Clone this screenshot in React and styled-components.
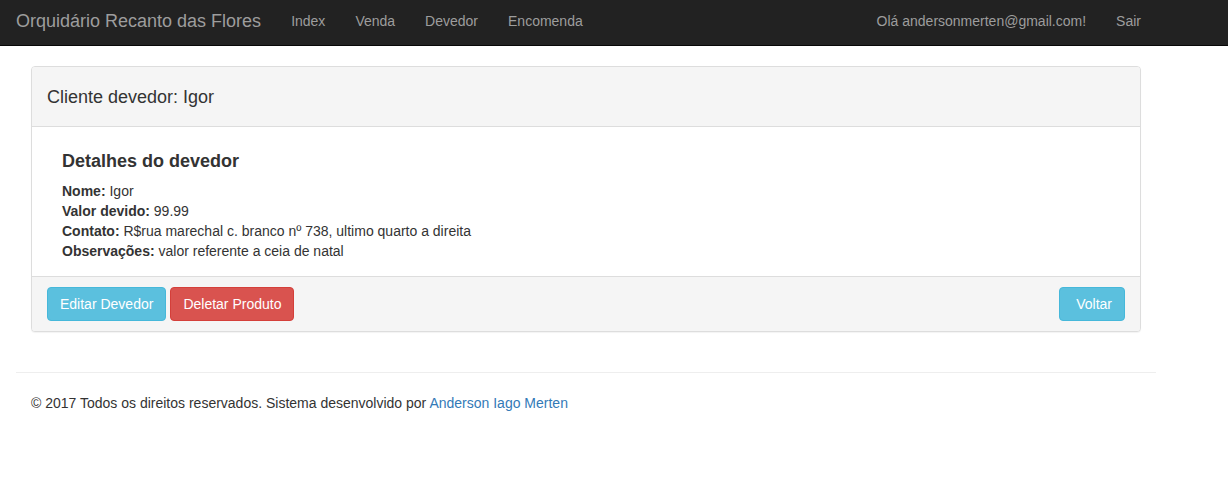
import styled, { createGlobalStyle } from "styled-components";

const GlobalStyle = createGlobalStyle`
  * {
    box-sizing: border-box;
  }

  body {
    margin: 0;
    background: #fff;
    color: #333;
    font-family: "Liberation Sans", Arial, sans-serif;
    font-size: 14px;
    line-height: 20px;
  }
`;

const debtor = {
  nome: "Igor",
  valor: "99.99",
  contato: "R$rua marechal c. branco nº 738, ultimo quarto a direita",
  obs: "valor referente a ceia de natal",
};

const App = () => {
  return (
    <>
      <GlobalStyle />
      <Navbar>
        <Container>
          <NavLeft>
            <Brand href="#">Orquidário Recanto das Flores</Brand>
            <NavLink href="#">Index</NavLink>
            <NavLink href="#">Venda</NavLink>
            <NavLink href="#">Devedor</NavLink>
            <NavLink href="#">Encomenda</NavLink>
          </NavLeft>
          <NavRight>
            <NavLink href="#">Olá andersonmerten@gmail.com!</NavLink>
            <NavLink href="#">Sair</NavLink>
          </NavRight>
        </Container>
      </Navbar>

      <Main>
        <Panel>
          <PanelHeading>Cliente devedor: {debtor.nome}</PanelHeading>
          <PanelBody>
            <Title>Detalhes do devedor</Title>
            <Info>
              <b>Nome:</b> {debtor.nome}
            </Info>
            <Info>
              <b>Valor devido:</b> {debtor.valor}
            </Info>
            <Info>
              <b>Contato:</b> {debtor.contato}
            </Info>
            <Info>
              <b>Observações:</b> {debtor.obs}
            </Info>
          </PanelBody>
          <PanelFooter>
            <ButtonGroup>
              <Button $variant="info">Editar Devedor</Button>
              <Button $variant="danger">Deletar Produto</Button>
            </ButtonGroup>
            <Button $variant="info">{"\u00a0"}Voltar</Button>
          </PanelFooter>
        </Panel>

        <Footer>
          © 2017 Todos os direitos reservados. Sistema desenvolvido por{" "}
          <FooterLink href="#">Anderson Iago Merten</FooterLink>
        </Footer>
      </Main>
    </>
  );
};

export default App;

const Navbar = styled.nav`
  background: #222;
  border-bottom: 1px solid #080808;
`;

const Container = styled.div`
  width: 1170px;
  margin-left: 1px;
  padding: 0 15px;
  display: flex;
  justify-content: space-between;
  align-items: center;
  height: 45px;
`;

const NavLeft = styled.div`
  display: flex;
  align-items: center;
`;

const NavRight = styled.div`
  display: flex;
  align-items: center;
`;

const Brand = styled.a`
  color: #9d9d9d;
  font-size: 18px;
  line-height: 20px;
  text-decoration: none;
  padding: 11px 15px 14px 0;
`;

const NavLink = styled.a`
  color: #9d9d9d;
  font-size: 14px;
  line-height: 20px;
  text-decoration: none;
  padding: 11px 15px 14px;
`;

const Main = styled.div`
  width: 1170px;
  margin-left: 1px;
  padding: 20px 15px 0;
`;

const Panel = styled.div`
  margin: 0 15px 20px;
  border: 1px solid #ddd;
  border-radius: 4px;
  background: #fff;
  box-shadow: 0 1px 1px rgba(0, 0, 0, 0.05);
  overflow: hidden;
`;

const PanelHeading = styled.div`
  background: #f5f5f5;
  border-bottom: 1px solid #ddd;
  padding: 20px 15px 19px;
  font-size: 18px;
  line-height: 20px;
  color: #333;
`;

const PanelBody = styled.div`
  padding: 15px 30px 15px;
`;

const Title = styled.h4`
  margin: 9px 0 10px;
  font-size: 18px;
  line-height: 20px;
  font-weight: bold;
`;

const Info = styled.div`
  font-size: 14px;
  line-height: 20px;

  b {
    font-weight: bold;
  }
`;

const PanelFooter = styled.div`
  background: #f5f5f5;
  border-top: 1px solid #ddd;
  padding: 10px 15px;
  display: flex;
  justify-content: space-between;
`;

const ButtonGroup = styled.div`
  display: flex;
  gap: 4px;
`;

const Button = styled.button`
  font-family: "Liberation Sans", Arial, sans-serif;
  font-size: 14px;
  line-height: 20px;
  padding: 6px 12px;
  border-radius: 4px;
  color: #fff;
  cursor: pointer;
  background: ${(p) => (p.$variant === "danger" ? "#d9534f" : "#5bc0de")};
  border: 1px solid ${(p) => (p.$variant === "danger" ? "#d43f3a" : "#46b8da")};
`;

const Footer = styled.footer`
  border-top: 1px solid #eee;
  margin-top: 40px;
  padding: 20px 15px;
  font-size: 14px;
  line-height: 20px;
`;

const FooterLink = styled.a`
  color: #337ab7;
  text-decoration: none;
`;
